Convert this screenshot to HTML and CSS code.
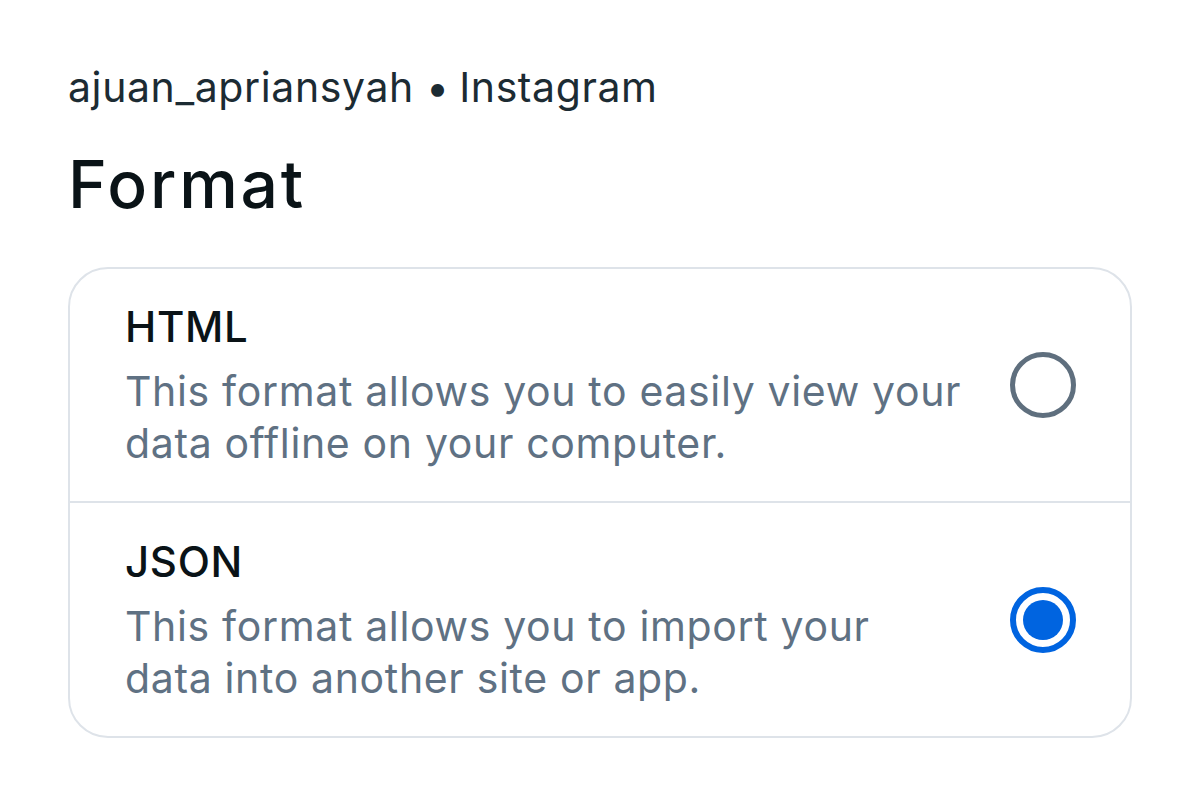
FILE: index.html
```html
<!DOCTYPE html>
<html lang="en">
<head>
<meta charset="utf-8">
<title>Format</title>
<link rel="stylesheet" href="styles.css">
</head>
<body>
<main class="page">
  <p class="context">ajuan_apriansyah <span class="dot">•</span> Instagram</p>
  <h1 class="heading">Format</h1>
  <div class="card">
    <label class="option">
      <div class="option-text">
        <div class="option-title">HTML</div>
        <div class="option-desc">This format allows you to easily view your data offline on your computer.</div>
      </div>
      <span class="radio"></span>
    </label>
    <label class="option">
      <div class="option-text">
        <div class="option-title">JSON</div>
        <div class="option-desc">This format allows you to import your data into another site or app.</div>
      </div>
      <span class="radio radio-on"><span class="radio-dot"></span></span>
    </label>
  </div>
</main>
</body>
</html>
```
FILE: styles.css
```css
html, body {
  margin: 0;
  padding: 0;
  background: #ffffff;
}
body {
  font-family: Inter, "Noto Sans", sans-serif;
  color: #0a1317;
}
.page {
  padding: 61px 68px 0 68px;
}
.context {
  margin: 0;
  font-size: 41px;
  line-height: 52px;
  letter-spacing: 0.6px;
  color: #1c2b33;
}
.dot {
  letter-spacing: -2px;
}
.heading {
  margin: 31px 0 0 0;
  font-size: 66px;
  line-height: 80px;
  font-weight: 500;
  letter-spacing: 2.8px;
  color: #0a1317;
}
.card {
  margin-top: 43px;
  border: 2px solid #dee3e9;
  border-radius: 40px;
  display: flex;
  flex-direction: column;
}
.option {
  display: flex;
  align-items: center;
  padding: 0 54px 0 55px;
  height: 232px;
  box-sizing: border-box;
}
.option + .option {
  border-top: 2px solid #dee3e9;
  height: 235px;
}
.option-text {
  flex: 1;
  max-width: 839px;
}
.option-title {
  font-size: 42px;
  line-height: 52px;
  font-weight: 500;
  letter-spacing: 0.7px;
  color: #0a1317;
  margin-bottom: 12px;
}
.option-desc {
  font-size: 41px;
  line-height: 52px;
  letter-spacing: 0.65px;
  color: #5f7183;
}
.radio {
  margin-left: auto;
  width: 66px;
  height: 66px;
  box-sizing: border-box;
  border: 5px solid #5f6f7e;
  border-radius: 50%;
  display: flex;
  align-items: center;
  justify-content: center;
}
.radio-on {
  border: 6px solid #0064e0;
}
.radio-dot {
  width: 40px;
  height: 40px;
  border-radius: 50%;
  background: #0064e0;
}
```
